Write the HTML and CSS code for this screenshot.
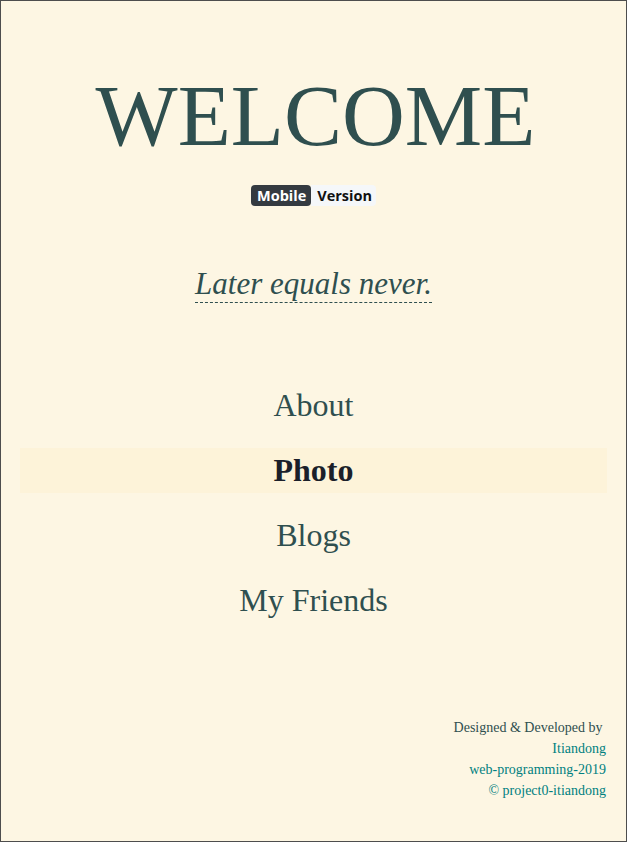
FILE: index.html
```html
<!DOCTYPE html>
<html lang="en">
<head>
<meta charset="utf-8">
<title>Welcome</title>
<link rel="stylesheet" href="styles.css">
</head>
<body>
<div class="page">
  <header class="hero">
    <h1 class="title">WELCOME</h1>
    <div class="version">
      <span class="badge">Mobile</span><span class="tag">Version</span>
    </div>
    <p class="motto"><span class="motto-text">Later equals never.</span></p>
  </header>
  <nav class="menu">
    <a class="item" href="#">About</a>
    <a class="item active" href="#">Photo</a>
    <a class="item" href="#">Blogs</a>
    <a class="item" href="#">My Friends</a>
  </nav>
  <footer class="foot">
    <div class="line dark">Designed &amp; Developed by&nbsp;</div>
    <div class="line">Itiandong</div>
    <div class="line">web-programming-2019</div>
    <div class="line">© project0-itiandong</div>
  </footer>
</div>
</body>
</html>
```
FILE: styles.css
```css
html, body {
  margin: 0;
  padding: 0;
}
body {
  background: #fdf6e3;
  font-family: "Liberation Serif", "Times New Roman", serif;
  color: #2f4f4f;
}
.page {
  box-sizing: border-box;
  height: 842px;
  border: 1px solid #4d4d4d;
  display: flex;
  flex-direction: column;
  background: #fdf6e3;
}
.hero {
  display: flex;
  flex-direction: column;
  align-items: center;
  padding-top: 67px;
}
.title {
  margin: 0;
  padding-left: 4px;
  font-weight: normal;
  font-size: 87px;
  line-height: 96px;
  color: #2f4f4f;
}
.version {
  display: flex;
  margin-top: 21px;
  font-family: "Open Sans", "DejaVu Sans", sans-serif;
  font-weight: 700;
  font-size: 14.5px;
  line-height: 21px;
}
.badge {
  background: #343a40;
  color: #fff;
  padding: 0 5px 0 6px;
  border-radius: 4px;
}
.tag {
  background: #f5f7f9;
  color: #111;
  padding: 0 4px 0 6px;
  border-radius: 0 4px 4px 0;
}
.motto {
  margin: 61px 0 0;
  font-family: "Liberation Serif", "Times New Roman", serif;
  font-size: 31px;
  font-style: italic;
  line-height: 34px;
}
.motto-text {
  display: inline-block;
  border-bottom: 1px dashed #2f4f4f;
  line-height: 34px;
  padding-bottom: 1px;
}
.menu {
  display: flex;
  flex-direction: column;
  margin: 80px 19px 0;
  gap: 20px;
}
.item {
  display: block;
  text-align: center;
  font-size: 32px;
  line-height: 45px;
  color: #2f4f4f;
  text-decoration: none;
}
.item.active {
  background: #fdf3d9;
  font-weight: bold;
  color: #1b1f2a;
}
.foot {
  margin-top: auto;
  padding: 0 20px 40px 0;
  text-align: right;
  font-size: 14px;
  line-height: 21px;
  color: #008080;
}
.foot .dark {
  color: #2f4f4f;
}
```
